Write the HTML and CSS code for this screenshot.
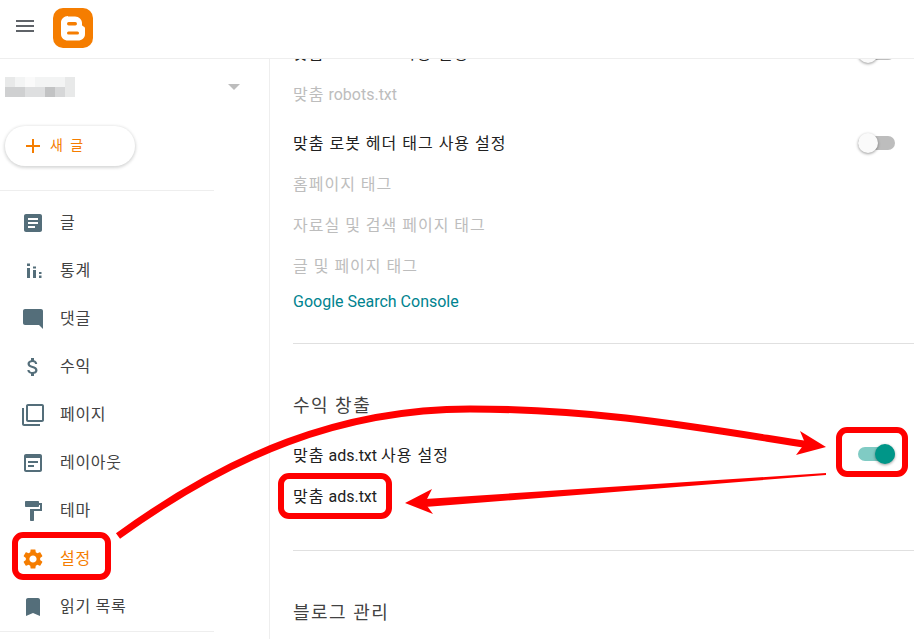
FILE: index.html
```html
<!DOCTYPE html>
<html lang="ko">
<head>
<meta charset="utf-8">
<title>Blogger 설정</title>
<link rel="stylesheet" href="styles.css">
</head>
<body>
<div class="app">
  <header class="topbar">
    <div class="hamburger"><span></span><span></span><span></span></div>
    <svg class="logo" viewBox="0 0 40 40" width="40" height="40">
      <rect width="40" height="40" rx="10" fill="#f57d00"/>
      <path d="M15 8.500h7c4 0 7 3 7 6.500v2c0 1.500 3 1 3 3.500v5.500c0 4-3 6.500-7 6.500h-10c-4 0-7-2.500-7-6.500v-11.500c0-3.500 3-6.500 7-6.500z" fill="#fff"/>
      <rect x="14" y="14" width="10" height="3.500" rx="1.700" fill="#f57d00"/>
      <rect x="14" y="23.500" width="12" height="3" rx="1.500" fill="#f57d00"/>
    </svg>
  </header>
  <div class="body-row">
    <aside class="sidebar">
      <div class="blog-select">
        <div class="mosaic">
          <i class="c1"></i><i class="c2"></i><i class="c3"></i><i class="c2"></i><i class="c2"></i><i class="c2"></i><i class="c1"></i>
          <i class="d1"></i><i class="d1"></i><i class="d2"></i><i class="d2"></i><i class="d3"></i><i class="d4"></i><i class="c1"></i>
        </div>
        <div class="caret"></div>
      </div>
      <button class="new-post"><span class="plus"></span><span class="new-label">새 글</span></button>
      <div class="side-divider first"></div>
      <nav class="nav">
        <a class="nav-item"><svg viewBox="0 0 24 24"><path d="M19 3H5c-1.100 0-2 .9-2 2v14c0 1.100.9 2 2 2h14c1.100 0 2-.9 2-2V5c0-1.100-.9-2-2-2zm-5 14H7v-2h7v2zm3-4H7v-2h10v2zm0-4H7V7h10v2z"/></svg><span>글</span></a>
        <a class="nav-item"><svg viewBox="0 0 24 24"><path d="M6 4.500h3v2.500H6zM6 9h3v10H6zM12 11h3v8h-3zM12 7.500h3v2h-3zM18 13h2.500v2h-2.500zM18 16.500h2.500V19h-2.500z"/></svg><span>통계</span></a>
        <a class="nav-item"><svg viewBox="0 0 24 24"><path d="M21.990 4c0-1.100-.89-2-1.990-2H4c-1.100 0-2 .9-2 2v12c0 1.100.9 2 2 2h14l4 4-.01-18z"/></svg><span>댓글</span></a>
        <a class="nav-item"><svg viewBox="0 0 24 24"><path d="M11.800 10.900c-2.270-.59-3-1.200-3-2.150 0-1.090 1.010-1.850 2.700-1.850 1.780 0 2.440.85 2.500 2.100h2.210c-.07-1.720-1.120-3.300-3.210-3.810V3h-3v2.160c-1.940.42-3.500 1.680-3.500 3.610 0 2.310 1.910 3.460 4.700 4.130 2.500.6 3 1.480 3 2.410 0 .69-.49 1.790-2.700 1.790-2.060 0-2.870-.92-2.980-2.100h-2.200c.12 2.190 1.760 3.420 3.680 3.830V21h3v-2.150c1.950-.37 3.500-1.500 3.500-3.550 0-2.840-2.430-3.810-4.700-4.400z"/></svg><span>수익</span></a>
        <a class="nav-item"><svg viewBox="0 0 24 24"><path d="M3 5H1v16c0 1.100.9 2 2 2h16v-2H3V5zm18-4H7c-1.100 0-2 .9-2 2v14c0 1.100.9 2 2 2h14c1.100 0 2-.9 2-2V3c0-1.100-.9-2-2-2zm0 16H7V3h14v14z"/></svg><span>페이지</span></a>
        <a class="nav-item"><svg viewBox="0 0 24 24"><path d="M19 3H5c-1.100 0-2 .9-2 2v14c0 1.100.9 2 2 2h14c1.100 0 2-.9 2-2V5c0-1.100-.9-2-2-2zm0 16H5V7h14v12zm-2-7H7v-2h10v2zm-4 4H7v-2h6v2z"/></svg><span>레이아웃</span></a>
        <a class="nav-item"><svg viewBox="0 0 24 24"><path d="M18 4V3c0-.55-.45-1-1-1H5c-.55 0-1 .45-1 1v4c0 .55.45 1 1 1h12c.55 0 1-.45 1-1V6h1v4H9v11c0 .55.45 1 1 1h2c.55 0 1-.45 1-1v-9h8V4h-3z"/></svg><span>테마</span></a>
        <a class="nav-item active"><svg viewBox="0 0 24 24"><path d="M19.140 12.940c.04-.3.06-.61.06-.94 0-.32-.02-.64-.07-.94l2.030-1.580c.18-.14.23-.41.12-.61l-1.920-3.320c-.12-.22-.37-.29-.59-.22l-2.390.96c-.5-.38-1.030-.7-1.620-.94l-.36-2.540c-.04-.24-.24-.41-.48-.41h-3.840c-.24 0-.43.17-.47.41l-.36 2.540c-.59.24-1.130.57-1.620.94l-2.390-.96c-.22-.08-.47 0-.59.22L2.740 8.870c-.12.21-.08.47.12.61l2.030 1.580c-.05.3-.09.63-.09.94s.02.64.07.94l-2.030 1.580c-.18.14-.23.41-.12.61l1.920 3.320c.12.22.37.29.59.22l2.390-.96c.5.38 1.030.7 1.620.94l.36 2.540c.05.24.24.41.48.41h3.840c.24 0 .44-.17.47-.41l.36-2.540c.59-.24 1.130-.56 1.620-.94l2.390.96c.22.08.47 0 .59-.22l1.920-3.320c.12-.22.07-.47-.12-.61l-2.010-1.580zM12 15.600c-1.980 0-3.600-1.620-3.600-3.600s1.620-3.600 3.600-3.600 3.600 1.620 3.600 3.600-1.620 3.600-3.600 3.600z"/></svg><span>설정</span></a>
        <a class="nav-item"><svg viewBox="0 0 24 24"><path d="M17 3H7c-1.100 0-1.990.9-1.990 2L5 21l7-3 7 3V5c0-1.100-.9-2-2-2z"/></svg><span>읽기 목록</span></a>
      </nav>
      <div class="side-divider last"></div>
    </aside>
    <main class="content">
      <div class="row clipped"><span><span class="ko">맞춤</span> robots.txt <span class="ko">사용 설정</span></span><div class="toggle"><b></b></div></div>
      <div class="row sub"><span><span class="ko">맞춤</span> robots.txt</span></div>
      <div class="row gap"><span class="ko">맞춤 로봇 헤더 태그 사용 설정</span><div class="toggle"><b></b></div></div>
      <div class="row sub"><span class="ko">홈페이지 태그</span></div>
      <div class="row sub"><span class="ko">자료실 및 검색 페이지 태그</span></div>
      <div class="row sub"><span class="ko">글 및 페이지 태그</span></div>
      <a class="console-link">Google Search Console</a>
      <div class="rule rule-a"></div>
      <h2 class="section-title">수익 창출</h2>
      <div class="row ads"><span><span class="ko">맞춤</span> ads.txt <span class="ko">사용 설정</span></span><div class="toggle on"><b></b></div></div>
      <div class="row ads-sub"><span><span class="ko">맞춤</span> ads.txt</span></div>
      <div class="rule rule-b"></div>
      <h2 class="section-title">블로그 관리</h2>
    </main>
  </div>
  <svg class="annotations" viewBox="0 0 914 639" width="914" height="639">
    <g fill="none" stroke="#f00" stroke-width="6">
      <rect x="15" y="535" width="93" height="42" rx="8"/>
      <rect x="281" y="476" width="108" height="40" rx="8"/>
      <rect x="839" y="430" width="66" height="44" rx="8"/>
      <path stroke-width="7" d="M118 536C230 455 340 409 470 409C600 409 700 428 810 445"/>
    </g>
    <g fill="#f00">
      <polygon points="826,447 800,431 805,443 796,455"/>
      <polygon points="826,473 826,475 425,507 425,499"/>
      <polygon points="405,503 432,489 425,503 433,514"/>
    </g>
  </svg>
</div>
</body>
</html>
```
FILE: styles.css
```css
* { box-sizing: border-box; }
html, body { margin: 0; padding: 0; }
body {
  width: 914px;
  height: 639px;
  overflow: hidden;
  background: #fff;
  font-family: Roboto, "Noto Sans CJK KR", sans-serif;
  color: #212121;
}
.app { position: relative; width: 914px; height: 639px; display: flex; flex-direction: column; }
.topbar {
  height: 59px;
  flex: none;
  border-bottom: 1px solid #eee;
  display: flex;
  align-items: flex-start;
  padding: 8px 0 0 16px;
  gap: 19px;
}
.hamburger { width: 18px; margin-top: 12px; display: flex; flex-direction: column; gap: 3px; }
.hamburger span { display: block; height: 2px; background: #5f6368; }
.logo { display: block; }
.body-row { flex: 1; display: flex; min-height: 0; }
.sidebar { width: 270px; flex: none; border-right: 1px solid #eee; overflow: hidden; }
.blog-select {
  display: flex;
  justify-content: space-between;
  align-items: center;
  padding: 18px 29px 0 5px;
}
.mosaic { display: grid; grid-template-columns: repeat(7, 10px); grid-auto-rows: 10px; }
.c1 { background: #e8e9e9; }
.c2 { background: #f3f4f4; }
.c3 { background: #fafafa; }
.d1 { background: #cfd0d1; }
.d2 { background: #dedfe0; }
.d3 { background: #c2c3c4; }
.d4 { background: #d6d7d8; }
.caret {
  width: 0;
  height: 0;
  border-left: 6px solid transparent;
  border-right: 6px solid transparent;
  border-top: 6px solid #bdbdbd;
}
.new-post {
  display: flex;
  align-items: center;
  width: 130px;
  height: 40px;
  margin: 29px 0 0 5px;
  padding: 0 0 0 21px;
  background: #fff;
  border: 0;
  border-radius: 20px;
  box-shadow: 0 1px 3px 1px rgba(60, 64, 67, .2);
  color: #f57d00;
  font: 14px Roboto, "Noto Sans CJK KR", sans-serif;
}
.plus { position: relative; width: 14px; height: 14px; flex: none; background:
  linear-gradient(#f57d00, #f57d00) center / 14px 2px no-repeat,
  linear-gradient(#f57d00, #f57d00) center / 2px 14px no-repeat; }
.new-label { margin-left: 10px; letter-spacing: 2px; padding-bottom: 4px; }
.side-divider { width: 214px; height: 1px; background: #eee; }
.side-divider.first { margin-top: 24px; }
.nav { padding-top: 8px; display: flex; flex-direction: column; }
.nav-item {
  height: 48px;
  display: flex;
  align-items: center;
  padding-left: 21px;
  gap: 15px;
  font-size: 16px;
  letter-spacing: .7px;
  color: #424242;
}
.nav-item span { padding-bottom: 4px; }
.nav-item svg { width: 24px; height: 24px; fill: #546e7a; flex: none; }
.nav-item.active { color: #f57d00; }
.nav-item.active svg { fill: #f57d00; }
.content { flex: 1; min-width: 0; overflow: hidden; padding: 0 0 0 23px; font-size: 16px; }
.ko { letter-spacing: 1px; }
.row {
  height: 41px;
  line-height: 42px;
  display: flex;
  justify-content: space-between;
  align-items: flex-start;
  padding-right: 19px;
}
.clipped { margin-top: -26px; }
.sub { color: #bdbdbd; }
.gap { margin-top: 8px; }
.ads { margin-top: 10px; line-height: 44px; }
.ads-sub { margin-top: 1px; }
.clipped + .sub { margin-top: 0; }
.console-link { display: block; height: 29px; line-height: 29px; color: #00838f; }
.rule { height: 1px; background: #e0e0e0; }
.rule-a { margin-top: 27px; }
.rule-b { margin-top: 33px; }
.section-title {
  margin: 40px 0 0;
  height: 40px;
  line-height: 44px;
  font-size: 18px;
  font-weight: 400;
  letter-spacing: 1.500px;
  color: #424242;
}
.toggle { position: relative; width: 37px; height: 14px; margin-top: 13px; border-radius: 7px; background: #bdbdbd; }
.toggle b {
  position: absolute;
  left: 0;
  top: -3px;
  width: 20px;
  height: 20px;
  border-radius: 50%;
  background: #fafafa;
  box-shadow: 0 1px 3px rgba(0, 0, 0, .4);
}
.toggle.on { background: #80cbc4; }
.toggle.on b { left: 17px; background: #009688; }
.annotations { position: absolute; left: 0; top: 0; pointer-events: none; }
```
